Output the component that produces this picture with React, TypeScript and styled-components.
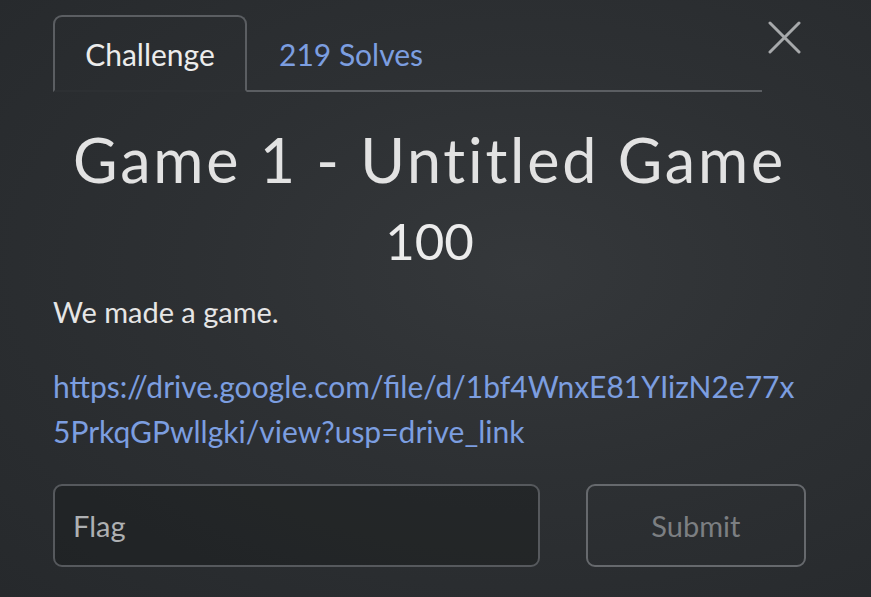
import React from "react";
import styled, { createGlobalStyle } from "styled-components";

const Global = createGlobalStyle`
  html, body { margin: 0; padding: 0; }
  body {
    width: 871px;
    height: 597px;
    overflow: hidden;
    background: radial-gradient(ellipse at 60% 45%, #35383b 0%, #2d3033 45%, #26292c 100%);
    font-family: Lato, "Open Sans", sans-serif;
    color: #e4e4e4;
  }
`;

const Modal = styled.div`
  position: relative;
  box-sizing: border-box;
  width: 871px;
  height: 597px;
  padding: 15px 65px 0 53px;
`;

const TabBar = styled.div`
  display: flex;
  width: 709px;
  border-bottom: 2px solid #5b5e62;
`;

const Tab = styled.div<{ $active?: boolean }>`
  box-sizing: border-box;
  height: 77px;
  margin-bottom: -2px;
  display: flex;
  align-items: center;
  justify-content: center;
  font-size: 30px;
  padding: 0 ${(p) => (p.$active ? "30px" : "30px")};
  ${(p) =>
    p.$active
      ? `
    width: 194px;
    border: 2px solid #5b5e62;
    border-bottom-color: #2d3033;
    border-radius: 9px 9px 0 0;
    color: #ececec;
    background: transparent;
  `
      : `
    color: #7c9ee0;
    border: 2px solid transparent;
  `}
`;

const Close = styled.button`
  position: absolute;
  top: 21px;
  right: 70px;
  width: 33px;
  height: 33px;
  padding: 0;
  border: none;
  background: none;
  display: flex;
  align-items: center;
  justify-content: center;
`;

const Title = styled.h1`
  margin: 28px 0 0;
  text-align: center;
  font-weight: 400;
  font-size: 61px;
  letter-spacing: 2.8px;
  line-height: 80px;
  color: #e2e2e2;
`;

const Value = styled.div`
  margin-top: 9px;
  text-align: center;
  font-size: 51px;
  line-height: 64px;
  color: #ececec;
`;

const Text = styled.p`
  margin: 17px 0 0;
  font-size: 29px;
  line-height: 44px;
  color: #e6e6e6;
`;

const Link = styled.a`
  display: block;
  margin-top: 30px;
  font-size: 30px;
  line-height: 45px;
  color: #7c9ee0;
  text-decoration: none;
  word-break: break-all;
`;

const Form = styled.form`
  display: flex;
  gap: 46px;
  margin-top: 30px;
`;

const FlagInput = styled.input`
  box-sizing: border-box;
  width: 488px;
  height: 83px;
  border: 2px solid #56595d;
  border-radius: 9px;
  background: rgba(20, 22, 24, 0.35);
  padding: 0 18px;
  font-family: Lato, sans-serif;
  font-size: 29px;
  color: #e6e6e6;
  outline: none;
  &::placeholder {
    color: #aeb0b2;
  }
`;

const Submit = styled.button`
  box-sizing: border-box;
  width: 221px;
  height: 83px;
  border: 2px solid #66696d;
  border-radius: 9px;
  background: transparent;
  font-family: Lato, sans-serif;
  font-size: 29px;
  color: #7c7f82;
`;

export default function App() {
  return (
    <>
      <Global />
      <Modal>
        <TabBar>
          <Tab $active>Challenge</Tab>
          <Tab>219 Solves</Tab>
        </TabBar>
        <Close aria-label="Close">
          <svg width="33" height="33" viewBox="0 0 33 33">
            <path d="M2 2 L31 31 M31 2 L2 31" stroke="#a7a9ab" strokeWidth="3" strokeLinecap="round" />
          </svg>
        </Close>
        <Title>Game 1 - Untitled Game</Title>
        <Value>100</Value>
        <Text>We made a game.</Text>
        <Link href="#">https://drive.google.com/file/d/1bf4WnxE81YIizN2e77x5PrkqGPwllgki/view?usp=drive_link</Link>
        <Form onSubmit={(e) => e.preventDefault()}>
          <FlagInput placeholder="Flag" />
          <Submit type="submit">Submit</Submit>
        </Form>
      </Modal>
    </>
  );
}
